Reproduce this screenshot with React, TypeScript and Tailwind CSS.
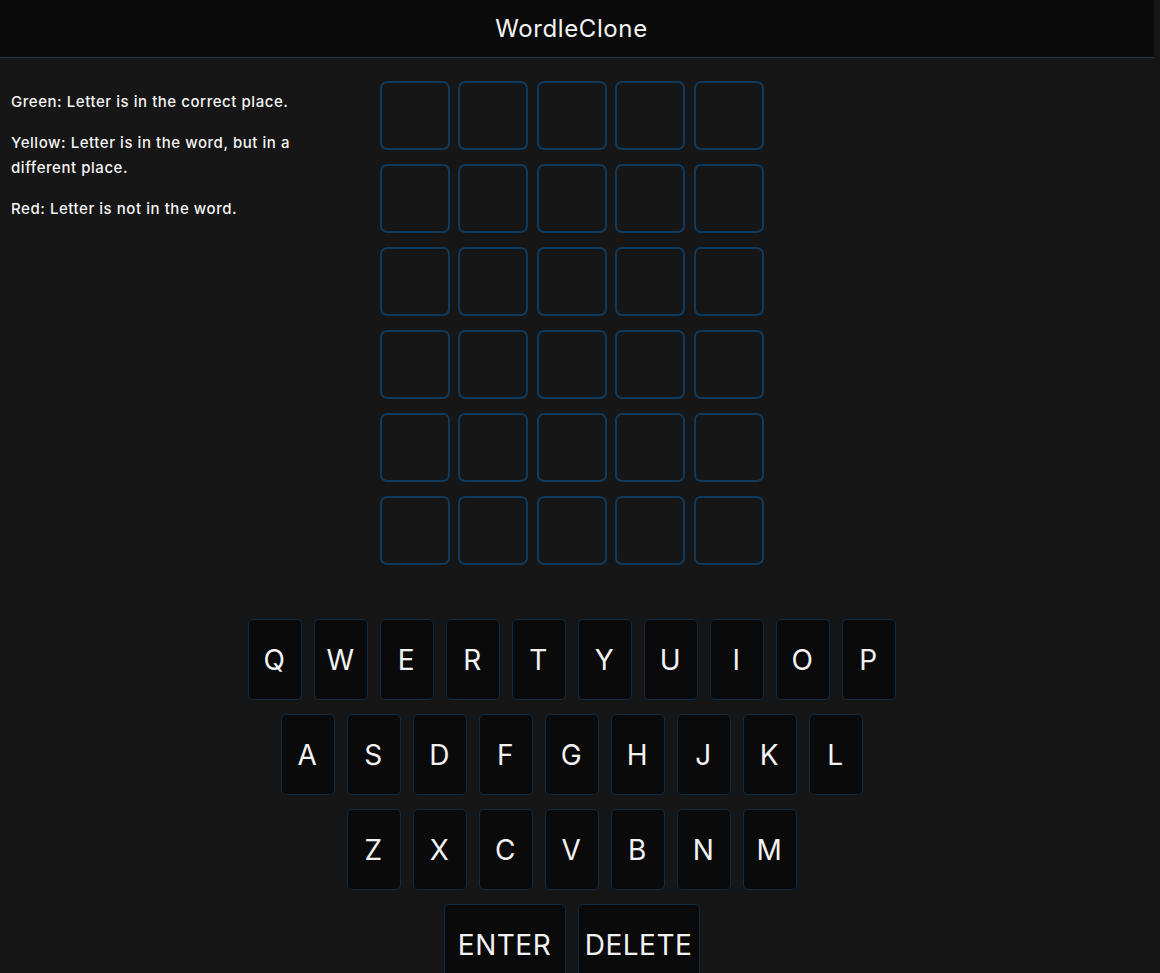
const ROWS = [
  ["Q", "W", "E", "R", "T", "Y", "U", "I", "O", "P"],
  ["A", "S", "D", "F", "G", "H", "J", "K", "L"],
  ["Z", "X", "C", "V", "B", "N", "M"],
];

function Key({ label, wide }: { label: string; wide?: boolean }) {
  return (
    <button
      className={
        "h-[81px] rounded-[5px] border border-[#0f2c45] bg-[#0a0a0a] text-[28px] tracking-[0.5px] text-[#f2f2f2] flex items-center justify-center " +
        (wide ? "w-[122px]" : "w-[54px]")
      }
    >
      {label}
    </button>
  );
}

export default function App() {
  return (
    <div className="min-h-[973px] bg-[#161616] text-[#f4f4f4] font-['Inter','Noto_Sans',sans-serif]">
      <header className="w-[1154px] h-[58px] bg-[#0a0a0a] border-b border-[#1a3850] flex items-center justify-center pr-[11px]">
        <h1 className="text-[24px] tracking-[0.6px] font-normal">WordleClone</h1>
      </header>

      <main className="w-[1143px] grid grid-cols-[1fr_auto_1fr]">
        <aside className="pl-[11px] pt-[31px] w-[310px] text-[15px] font-medium tracking-[0.55px] leading-[25px] flex flex-col gap-[16px]">
          <p>Green: Letter is in the correct place.</p>
          <p>Yellow: Letter is in the word, but in a different place.</p>
          <p>Red: Letter is not in the word.</p>
        </aside>

        <div className="pt-[23px] grid grid-cols-5 gap-x-[8.5px] gap-y-[14px]">
          {Array.from({ length: 30 }).map((_, i) => (
            <div
              key={i}
              className="w-[70px] h-[69px] rounded-[7px] border-2 border-[#0e3a5e] bg-[#161616]"
            />
          ))}
        </div>
        <div />
      </main>

      <section className="w-[1143px] mt-[54px] flex flex-col items-center gap-[14px]">
        {ROWS.map((row, i) => (
          <div key={i} className="flex gap-[12px]">
            {row.map((k) => (
              <Key key={k} label={k} />
            ))}
          </div>
        ))}
        <div className="flex gap-[12px]">
          <Key label="ENTER" wide />
          <Key label="DELETE" wide />
        </div>
      </section>
    </div>
  );
}
